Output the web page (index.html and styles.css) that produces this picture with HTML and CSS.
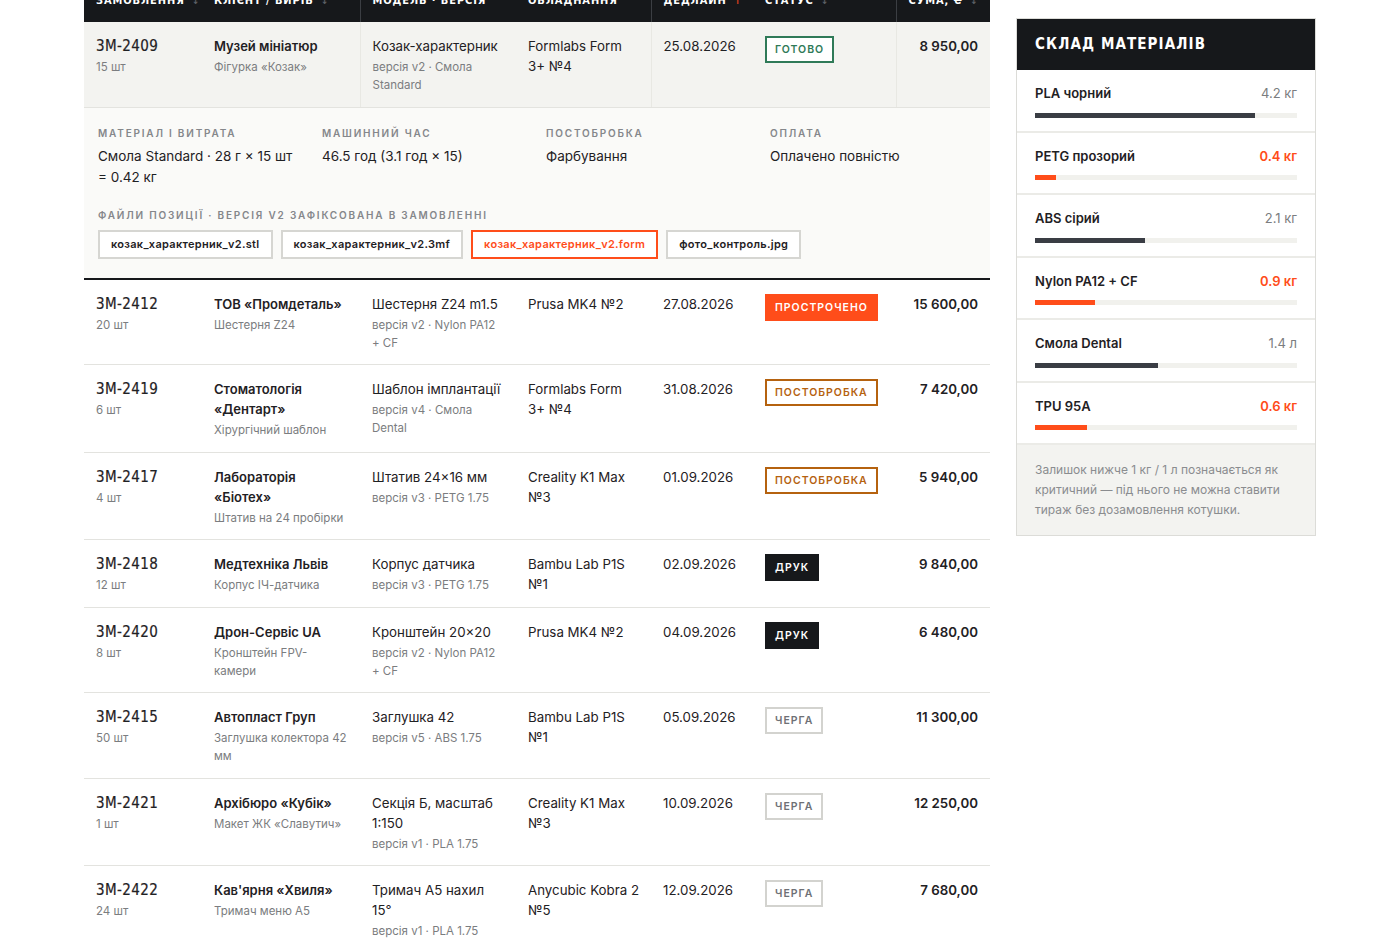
FILE: index.html
```html
<!DOCTYPE html>
<html lang="uk">
<head>
    <meta charset="UTF-8">
    <meta name="viewport" content="width=device-width, initial-scale=1.0">
    <title>Замовлення друку</title>
    <link rel="stylesheet" href="styles.css">
</head>
<body>
    <div class="page">
        <div class="orders">
            <table class="orders_table">
                <colgroup>
                    <col class="c_id">
                    <col class="c_client">
                    <col class="c_model">
                    <col class="c_machine">
                    <col class="c_date">
                    <col class="c_status">
                    <col class="c_sum">
                </colgroup>
                <thead>
                    <tr>
                        <th>Замовлення <i>↕</i></th>
                        <th>Клієнт / виріб <i>↕</i></th>
                        <th class="split">Модель · версія</th>
                        <th>Обладнання</th>
                        <th class="split">Дедлайн <i class="active">↑</i></th>
                        <th>Статус <i>↕</i></th>
                        <th class="split num">Сума, ₴ <i>↕</i></th>
                    </tr>
                </thead>
                <tbody>
                    <tr class="open">
                        <td><div class="oid">3М-2409</div><div class="sub">15 шт</div></td>
                        <td><div class="client">Музей мініатюр</div><div class="sub">Фігурка «Козак»</div></td>
                        <td class="split"><div>Козак-характерник</div><div class="sub">версія v2 · Смола Standard</div></td>
                        <td class="machine">Formlabs Form 3+&nbsp;№4</td>
                        <td class="split">25.08.2026</td>
                        <td><span class="badge done">Готово</span></td>
                        <td class="split num">8 950,00</td>
                    </tr>
                    <tr class="detail">
                        <td colspan="7">
                            <div class="facts">
                                <div>
                                    <div class="label">Матеріал і витрата</div>
                                    <div class="value">Смола Standard · 28 г × 15 шт = 0.42 кг</div>
                                </div>
                                <div>
                                    <div class="label">Машинний час</div>
                                    <div class="value">46.5 год (3.1 год × 15)</div>
                                </div>
                                <div>
                                    <div class="label">Постобробка</div>
                                    <div class="value">Фарбування</div>
                                </div>
                                <div>
                                    <div class="label">Оплата</div>
                                    <div class="value">Оплачено повністю</div>
                                </div>
                            </div>
                            <div class="label files_label">Файли позиції · версія v2 зафіксована в замовленні</div>
                            <div class="files">
                                <span class="file">козак_характерник_v2.stl</span>
                                <span class="file">козак_характерник_v2.3mf</span>
                                <span class="file current">козак_характерник_v2.form</span>
                                <span class="file">фото_контроль.jpg</span>
                            </div>
                        </td>
                    </tr>
                    <tr>
                        <td><div class="oid">3М-2412</div><div class="sub">20 шт</div></td>
                        <td><div class="client">ТОВ «Промдеталь»</div><div class="sub">Шестерня Z24</div></td>
                        <td><div>Шестерня Z24 m1.5</div><div class="sub">версія v2 · Nylon PA12 + CF</div></td>
                        <td class="machine">Prusa MK4 №2</td>
                        <td>27.08.2026</td>
                        <td><span class="badge late">Прострочено</span></td>
                        <td class="num">15 600,00</td>
                    </tr>
                    <tr>
                        <td><div class="oid">3М-2419</div><div class="sub">6 шт</div></td>
                        <td><div class="client">Стоматологія «Дентарт»</div><div class="sub">Хірургічний шаблон</div></td>
                        <td><div>Шаблон імплантації</div><div class="sub">версія v4 · Смола Dental</div></td>
                        <td class="machine">Formlabs Form 3+&nbsp;№4</td>
                        <td>31.08.2026</td>
                        <td><span class="badge post">Постобробка</span></td>
                        <td class="num">7 420,00</td>
                    </tr>
                    <tr>
                        <td><div class="oid">3М-2417</div><div class="sub">4 шт</div></td>
                        <td><div class="client">Лабораторія «Біотех»</div><div class="sub">Штатив на 24 пробірки</div></td>
                        <td><div>Штатив 24×16 мм</div><div class="sub">версія v3 · PETG 1.75</div></td>
                        <td class="machine">Creality K1 Max №3</td>
                        <td>01.09.2026</td>
                        <td><span class="badge post">Постобробка</span></td>
                        <td class="num">5 940,00</td>
                    </tr>
                    <tr>
                        <td><div class="oid">3М-2418</div><div class="sub">12 шт</div></td>
                        <td><div class="client">Медтехніка Львів</div><div class="sub">Корпус ІЧ-датчика</div></td>
                        <td><div>Корпус датчика</div><div class="sub">версія v3 · PETG 1.75</div></td>
                        <td class="machine">Bambu Lab P1S №1</td>
                        <td>02.09.2026</td>
                        <td><span class="badge print">Друк</span></td>
                        <td class="num">9 840,00</td>
                    </tr>
                    <tr>
                        <td><div class="oid">3М-2420</div><div class="sub">8 шт</div></td>
                        <td><div class="client">Дрон-Сервіс UA</div><div class="sub">Кронштейн FPV-камери</div></td>
                        <td><div>Кронштейн 20×20</div><div class="sub">версія v2 · Nylon PA12 + CF</div></td>
                        <td class="machine">Prusa MK4 №2</td>
                        <td>04.09.2026</td>
                        <td><span class="badge print">Друк</span></td>
                        <td class="num">6 480,00</td>
                    </tr>
                    <tr>
                        <td><div class="oid">3М-2415</div><div class="sub">50 шт</div></td>
                        <td><div class="client">Автопласт Груп</div><div class="sub">Заглушка колектора 42 мм</div></td>
                        <td><div>Заглушка 42</div><div class="sub">версія v5 · ABS 1.75</div></td>
                        <td class="machine">Bambu Lab P1S №1</td>
                        <td>05.09.2026</td>
                        <td><span class="badge queue">Черга</span></td>
                        <td class="num">11 300,00</td>
                    </tr>
                    <tr>
                        <td><div class="oid">3М-2421</div><div class="sub">1 шт</div></td>
                        <td><div class="client">Архібюро «Кубік»</div><div class="sub">Макет ЖК «Славутич»</div></td>
                        <td><div>Секція Б, масштаб 1:150</div><div class="sub">версія v1 · PLA 1.75</div></td>
                        <td class="machine">Creality K1 Max №3</td>
                        <td>10.09.2026</td>
                        <td><span class="badge queue">Черга</span></td>
                        <td class="num">12 250,00</td>
                    </tr>
                    <tr>
                        <td><div class="oid">3М-2422</div><div class="sub">24 шт</div></td>
                        <td><div class="client">Кав'ярня «Хвиля»</div><div class="sub">Тримач меню А5</div></td>
                        <td><div>Тримач А5 нахил 15°</div><div class="sub">версія v1 · PLA 1.75</div></td>
                        <td class="machine">Anycubic Kobra 2 №5</td>
                        <td>12.09.2026</td>
                        <td><span class="badge queue">Черга</span></td>
                        <td class="num">7 680,00</td>
                    </tr>
                </tbody>
            </table>
        </div>

        <aside class="stock">
            <div class="stock_head">Склад матеріалів</div>
            <div class="stock_item">
                <div class="stock_row"><b>PLA чорний</b><span>4.2 кг</span></div>
                <div class="bar"><div style="width: 84%"></div></div>
            </div>
            <div class="stock_item low">
                <div class="stock_row"><b>PETG прозорий</b><span>0.4 кг</span></div>
                <div class="bar"><div style="width: 8%"></div></div>
            </div>
            <div class="stock_item">
                <div class="stock_row"><b>ABS сірий</b><span>2.1 кг</span></div>
                <div class="bar"><div style="width: 42%"></div></div>
            </div>
            <div class="stock_item low">
                <div class="stock_row"><b>Nylon PA12 + CF</b><span>0.9 кг</span></div>
                <div class="bar"><div style="width: 23%"></div></div>
            </div>
            <div class="stock_item">
                <div class="stock_row"><b>Смола Dental</b><span>1.4 л</span></div>
                <div class="bar"><div style="width: 47%"></div></div>
            </div>
            <div class="stock_item low">
                <div class="stock_row"><b>TPU 95A</b><span>0.6 кг</span></div>
                <div class="bar"><div style="width: 20%"></div></div>
            </div>
            <p class="stock_note">Залишок нижче 1 кг / 1 л позначається як критичний — під нього не можна ставити тираж без дозамовлення котушки.</p>
        </aside>
    </div>
</body>
</html>
```

FILE: styles.css
```css
*{
    padding: 0;
    margin: 0;
    box-sizing: border-box;
}

body{
    background: #fff;
    color: #1f2124;
    font-family: "Inter", "Noto Sans", sans-serif;
    font-size: 13.3px;
}

.page{
    display: grid;
    grid-template-columns: 906px 300px;
    gap: 26px;
    width: 1232px;
    margin: -22px auto 0;
    align-items: start;
}

/* table */

.orders_table{
    width: 906px;
    table-layout: fixed;
    border-collapse: collapse;
}

.c_id{ width: 118px; }
.c_client{ width: 158px; }
.c_model{ width: 156px; }
.c_machine{ width: 135px; }
.c_date{ width: 102px; }
.c_status{ width: 143px; }
.c_sum{ width: 94px; }

.orders_table th{
    height: 44px;
    padding: 0 12px;
    background: #16181b;
    color: #fff;
    text-align: left;
    font-family: "Liberation Sans Narrow", "DejaVu Sans Condensed", sans-serif;
    font-size: 11px;
    font-weight: bold;
    letter-spacing: 0.9px;
    text-transform: uppercase;
    white-space: nowrap;
}

.orders_table th i{
    font-style: normal;
    color: #5d6066;
    font-size: 10px;
    margin-left: 3px;
}

.orders_table th i.active{
    color: #e2431b;
}

.orders_table th.split{
    border-left: 1px solid #3b3e43;
}

.orders_table .num{
    text-align: right;
}

.orders_table td{
    padding: 14px 12px 12.5px;
    vertical-align: top;
    line-height: 20px;
    border-bottom: 1px solid #e3e3df;
}

.orders_table td.machine{
    padding-right: 8px;
}

.orders_table td.num{
    font-weight: 600;
}

.orders_table tr.open td{
    background: #f3f3f0;
}

.orders_table tr.open td.split{
    border-left: 1px solid #e8e8e3;
}

.oid{
    font-family: "Liberation Sans Narrow", "DejaVu Sans Condensed", sans-serif;
    font-size: 15px;
    letter-spacing: 0.4px;
    -webkit-text-stroke: 0.2px #1f2124;
}

.client{
    font-weight: 600;
    font-size: 13px;
}

.sub{
    margin-top: 2px;
    font-size: 11.5px;
    line-height: 18px;
    color: #7b7d80;
}

/* badges */

.badge{
    display: inline-block;
    padding: 4px 8px;
    border: 2px solid transparent;
    font-size: 10.5px;
    font-weight: 600;
    line-height: 15px;
    letter-spacing: 1px;
    text-transform: uppercase;
}

.badge.done{
    border-color: #2f7a58;
    color: #2f7a58;
    background: #fff;
}

.badge.late{
    border-color: #ff4d1a;
    background: #ff4d1a;
    color: #fff;
}

.badge.post{
    border-color: #b5620f;
    color: #b5620f;
    background: #fff;
}

.badge.print{
    border-color: #16181b;
    background: #16181b;
    color: #fff;
}

.badge.queue{
    border-color: #d3d3cf;
    color: #6e7075;
    background: #fff;
}

/* expanded row */

.orders_table tr.detail td{
    padding: 18px 14px 19px;
    background: #fafaf8;
    border-top: 1px solid #e3e3df;
    border-bottom: 2px solid #16181b;
}

.facts{
    display: grid;
    grid-template-columns: repeat(4, 206px);
    gap: 18px;
}

.label{
    font-size: 10px;
    font-weight: 600;
    line-height: 14px;
    letter-spacing: 1.8px;
    text-transform: uppercase;
    color: #85878b;
}

.value{
    margin-top: 6px;
    line-height: 21px;
    font-size: 13.5px;
}

.files_label{
    margin-top: 20px;
}

.files{
    display: flex;
    gap: 8px;
    margin-top: 8px;
}

.file{
    padding: 6px 11px;
    border: 2px solid #d6d6d2;
    background: #fff;
    font-size: 11px;
    font-weight: 600;
    line-height: 13px;
    letter-spacing: 0.3px;
}

.file.current{
    border-color: #ff4d1a;
    color: #ff4d1a;
}

/* stock */

.stock{
    margin-top: 40px;
    border: 1px solid #dcdcd8;
}

.stock_head{
    height: 51px;
    line-height: 51px;
    padding: 0 18px;
    background: #16181b;
    color: #fff;
    font-family: "Liberation Sans Narrow", "DejaVu Sans Condensed", sans-serif;
    font-size: 15px;
    font-weight: bold;
    letter-spacing: 1.1px;
    text-transform: uppercase;
}

.stock_item{
    padding: 15px 18px 13px;
    border-bottom: 2px solid #ebebe7;
}

.stock_row{
    display: flex;
    justify-content: space-between;
    font-size: 13px;
    line-height: 17.5px;
}

.stock_row b{
    font-weight: 600;
}

.stock_row span{
    color: #7b7d80;
}

.stock_item.low .stock_row span{
    color: #ff4d1a;
    font-weight: 600;
}

.bar{
    margin-top: 10px;
    height: 5px;
    background: #f1f1ed;
}

.bar div{
    height: 5px;
    background: #3a3d44;
}

.stock_item.low .bar div{
    background: #ff4d1a;
}

.stock_note{
    padding: 15px 18px 15px;
    background: #f3f3f0;
    font-size: 12px;
    line-height: 20px;
    color: #8a8c8f;
}
```
